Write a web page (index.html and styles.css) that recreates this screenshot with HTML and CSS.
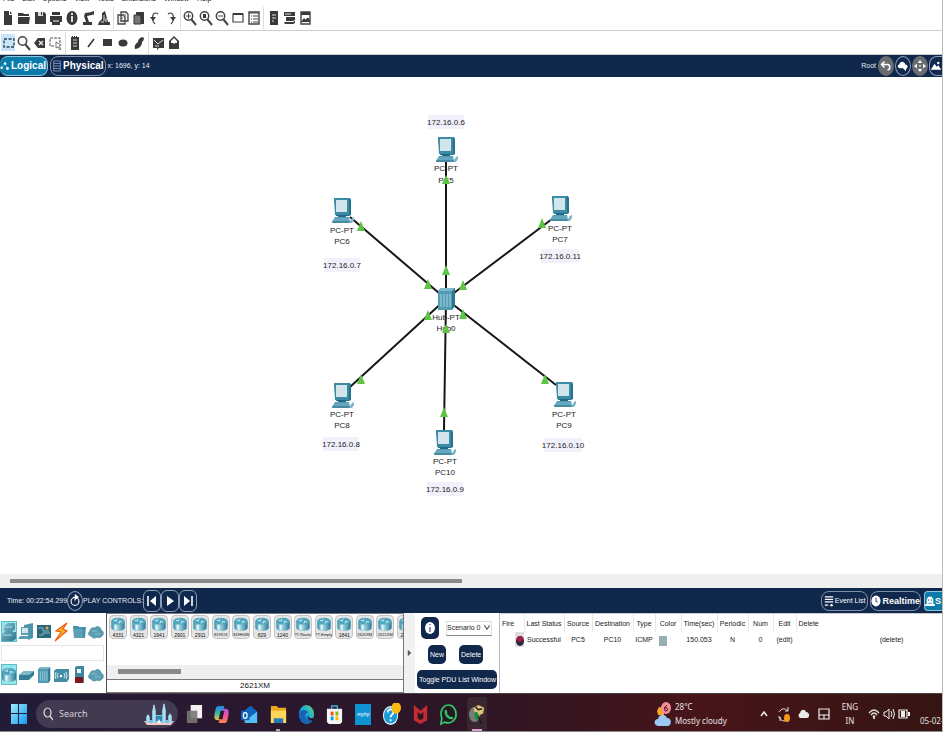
FILE: index.html
```html
<!DOCTYPE html>
<html lang="en">
<head>
<meta charset="utf-8">
<title>Network Simulator</title>
<link rel="stylesheet" href="styles.css">
</head>
<body>
<svg class="defs" aria-hidden="true">
  <defs>
    <linearGradient id="teal" x1="0" y1="0" x2="1" y2="1"><stop offset="0" stop-color="#7fbccd"/><stop offset="1" stop-color="#2c7892"/></linearGradient>
    <linearGradient id="cyl" x1="0" y1="0" x2="1" y2="0"><stop offset="0" stop-color="#2f8ba8"/><stop offset=".35" stop-color="#b9e2ec"/><stop offset="1" stop-color="#247b99"/></linearGradient>
    <linearGradient id="win" x1="0" y1="0" x2="1" y2="1"><stop offset="0" stop-color="#9be9ff"/><stop offset="1" stop-color="#149bf0"/></linearGradient>
    <linearGradient id="edge" x1="0" y1="1" x2="1" y2="0"><stop offset="0" stop-color="#1670c8"/><stop offset=".5" stop-color="#20a8e0"/><stop offset="1" stop-color="#5bd86a"/></linearGradient>
    <linearGradient id="cop" x1="0" y1="0" x2="0" y2="1"><stop offset="0" stop-color="#2187e8"/><stop offset=".5" stop-color="#37b5a5"/><stop offset="1" stop-color="#f4c533"/></linearGradient>
    <linearGradient id="cop2" x1="0" y1="0" x2="0" y2="1"><stop offset="0" stop-color="#a957ec"/><stop offset=".5" stop-color="#ef5595"/><stop offset="1" stop-color="#fb8b43"/></linearGradient>
  </defs>
  <symbol id="pc" viewBox="0 0 22 26">
    <path d="M2 1h16l1 2v15l-2 1H4z" fill="#27718a"/>
    <path d="M2 1h15v17H3z" fill="#3b8ba5"/>
    <path d="M4 3h11v12H4z" fill="#d2e5ec"/>
    <path d="M6 18h8v3H6z" fill="#256780"/>
    <path d="M3 20h14l1 5H0z" fill="#529db5"/>
    <path d="M0 24h18v2H0zM2 22h15" fill="#2c738c" stroke="#8fc4d3" stroke-width=".6"/>
    <path d="M18 24l2-3 2-1v3l-2 3h-2z" fill="#7fb6c7"/>
  </symbol>
  <symbol id="hub" viewBox="0 0 18 22">
    <path d="M1 3l3-3h14v18l-3 4H1z" fill="#2b7590"/><path d="M1 3h14v19H1z" fill="#519bb5"/><path d="M1 3l3-3h14l-3 3z" fill="#80b9ca"/>
    <path d="M4 6v13M7 6v13M10 6v13M13 6v13" stroke="#a7d3df" stroke-width="1"/>
  </symbol>
  <symbol id="router" viewBox="0 0 18 18">
    <path d="M1 5v8c0 5 16 5 16 0V5z" fill="url(#cyl)"/><ellipse cx="9" cy="5" rx="8" ry="4" fill="#4ea5bd"/>
    <path d="M4 4l4 1M14 6l-4-1M8 2l-1 2M10 8l1-2" stroke="#e6f8fb" stroke-width="1"/><path d="M6 10v5" stroke="#e8fbff" stroke-width="2"/>
  </symbol>
  <symbol id="cloud" viewBox="0 0 16 16"><path d="M3 12C0 12 0 8 2 7c0-3 3-4 5-3 2-3 6-1 6 2 3 1 3 5 1 6-1 2-4 2-5 1-2 2-5 1-6-1z" fill="#5b9db2" stroke="#3e8098" stroke-width=".6"/><path d="M4 7h5M7 10h5" stroke="#8ec1cf"/></symbol>
  <symbol id="lens" viewBox="0 0 16 16"><circle cx="6.500" cy="6" r="4.200" fill="none" stroke="#444" stroke-width="1.500"/><path d="M9.500 9.500L14 15" stroke="#444" stroke-width="2"/></symbol>
</svg>

<div class="app">
<nav class="menu" aria-label="Menu">
  <a href="#">File</a><a href="#">Edit</a><a href="#">Options</a><a href="#">View</a><a href="#">Tools</a><a href="#">Extensions</a><a href="#">Window</a><a href="#">Help</a>
</nav>

<div class="toolbar" role="toolbar" aria-label="Main">
  <button aria-label="New"><svg viewBox="0 0 16 16"><path d="M4 1h5v4h3v10H4zM10 1l2 3h-2z"/></svg></button>
  <button aria-label="Open"><svg viewBox="0 0 16 16"><path d="M2 3h5l1 1h5v2H2zM2 7h12l-1 7H2z"/></svg></button>
  <button aria-label="Save"><svg viewBox="0 0 16 16"><path d="M3 2h9l2 2v10H3z"/><path d="M6 2h5v4H6z" fill="#ddd"/><path d="M9 2h1v3H9z"/></svg></button>
  <button aria-label="Print"><svg viewBox="0 0 16 16"><path d="M4 2h8v3H4zM2 6h12v6H2zM4 10h8v5H4z"/><path d="M5 11h6" stroke="#eee"/></svg></button>
  <button aria-label="Info"><svg viewBox="0 0 16 16"><ellipse cx="8" cy="8" rx="5.500" ry="7"/><path d="M7 3h2v2H7zM7 6h2v6H7z" fill="#ddd"/></svg></button>
  <button aria-label="Wizard"><svg viewBox="0 0 16 16"><path d="M3 15h9v-3H9L7 6l5-1V2L5 3l-1 3 2 6H3z"/><path d="M11 2l3-1v4l-3-1z"/></svg></button>
  <button aria-label="Model"><svg viewBox="0 0 16 16"><path d="M2 15h12v-3h-2L9 1 6 3v6l-3 3z"/><path d="M8 5v6M10 8v4M5 12h3" stroke="#ddd"/></svg></button>
  <i></i>
  <button aria-label="Copy"><svg viewBox="0 0 16 16"><path d="M6 2h5l2 2v7H6zM3 5h5l2 2v7H3z" fill="#eee" stroke="#444" stroke-width="1.300"/><path d="M5 8h3M5 11h3M8 5h3" stroke="#666"/></svg></button>
  <button aria-label="Paste"><svg viewBox="0 0 16 16"><path d="M5 2h8v12H9V5H5z"/><path d="M3 5h5l2 2v7H3z" fill="#777" stroke="#333"/></svg></button>
  <button aria-label="Undo"><svg viewBox="0 0 16 16"><path d="M8 14c-3-3-3-6-2-9s4-2 5-1" fill="none" stroke="#444" stroke-width="1.200"/><path d="M3 7h6l-3 4z"/></svg></button>
  <button aria-label="Redo"><svg viewBox="0 0 16 16"><path d="M8 14c3-3 3-6 2-9S6 3 5 4" fill="none" stroke="#444" stroke-width="1.200"/><path d="M13 7H7l3 4z"/></svg></button>
  <i></i>
  <button aria-label="Zoom in"><svg viewBox="0 0 16 16"><use href="#lens"/><path d="M4 6h5M6.500 3.500v5" stroke="#444"/></svg></button>
  <button aria-label="Zoom reset"><svg viewBox="0 0 16 16"><use href="#lens"/><path d="M5 4h3v4H5z"/></svg></button>
  <button aria-label="Zoom out"><svg viewBox="0 0 16 16"><use href="#lens"/><path d="M4 6h5" stroke="#444"/></svg></button>
  <button aria-label="Viewport"><svg viewBox="0 0 16 16"><path d="M3 4h10v8H3z" fill="none" stroke="#444" stroke-width="1.200"/><path d="M3 3h10v2H3z"/></svg></button>
  <button aria-label="List"><svg viewBox="0 0 16 16"><path d="M3 2h10v12H3z" fill="none" stroke="#444" stroke-width="1.400"/><path d="M3 3h10M5 6h1M7 6h5M5 9h1M7 9h5M5 12h1M7 12h5" stroke="#444" stroke-width="1.200"/></svg></button>
  <i></i>
  <button aria-label="Notes"><svg viewBox="0 0 16 16"><path d="M5 1h8v14H5z"/><path d="M7 5h4M7 8h4M7 11h2" stroke="#ddd"/></svg></button>
  <button aria-label="Layers"><svg viewBox="0 0 16 16"><path d="M3 2h11v4H3zM5 7h9v3l-2 1H5zM3 12h9l2-1v2l-2 1H4z"/><path d="M4 4h6" stroke="#ddd"/></svg></button>
  <button aria-label="Picture"><svg viewBox="0 0 16 16"><path d="M4 2h9v12H4z" fill="none" stroke="#444" stroke-width="1.400"/><path d="M4 2h9v3H4zM4 12l3-4 2 2c1-4 4-2 4 2z"/></svg></button>
</div>
<div class="toolbar" role="toolbar" aria-label="Drawing">
  <button class="on" aria-label="Select"><svg viewBox="0 0 16 16"><path d="M3 4h10v8H3z" fill="none" stroke="#245" stroke-width="1.300" stroke-dasharray="3 1.500"/></svg></button>
  <button aria-label="Inspect"><svg viewBox="0 0 16 16"><use href="#lens"/></svg></button>
  <button aria-label="Erase"><svg viewBox="0 0 16 16"><path d="M2 8l4-5h7v10H6z"/><path d="M7 6l4 4M11 6l-4 4" stroke="#eee" stroke-width="1.300"/></svg></button>
  <button aria-label="Resize"><svg viewBox="0 0 16 16"><path d="M12 8V3H2v8h5" fill="none" stroke="#555" stroke-dasharray="3 1"/><path d="M8 7l5 3-2 1 2 3-1 1-2-3-2 1z" stroke="#555" stroke-width=".8" fill="#fff"/></svg></button>
  <i></i>
  <button aria-label="Note"><svg viewBox="0 0 16 16"><path d="M4 2h1V1h1v1h1V1h1v1h1V1h1v1h2v13H4z"/><path d="M6 5h4M6 8h4M6 11h4" stroke="#ccc"/></svg></button>
  <button aria-label="Line"><svg viewBox="0 0 16 16"><path d="M5 12l6-8" stroke="#333" stroke-width="1.500"/></svg></button>
  <button aria-label="Rectangle"><svg viewBox="0 0 16 16"><path d="M4 4h9v7H4z"/></svg></button>
  <button aria-label="Ellipse"><svg viewBox="0 0 16 16"><ellipse cx="8" cy="8" rx="4.500" ry="3.500"/></svg></button>
  <button aria-label="Freeform"><svg viewBox="0 0 16 16"><path d="M4 14c-1-3 0-5 3-7 0-4 5-6 6-4 0 2-1 3-2 4 0 4-3 7-7 7z"/></svg></button>
  <i></i>
  <button aria-label="Simple PDU"><svg viewBox="0 0 16 16"><path d="M3 3h11v10H9l-2 2v-2H3z"/><path d="M4 5l4 4 5-4M5 11h4" stroke="#ddd" fill="none"/></svg></button>
  <button aria-label="Complex PDU"><svg viewBox="0 0 16 16"><path d="M3 6l5-5 5 5v8H3z"/><path d="M5 6l3-3 3 3v2H9l-1 1-1-1H5z" fill="#fff"/></svg></button>
</div>

<header class="bar modes">
  <button class="pill active"><svg viewBox="0 0 12 14"><path d="M2 9l4-5 3 6" fill="none" stroke="#8fd0ec" stroke-width=".6"/><circle cx="2" cy="9" r="1.500"/><circle cx="6" cy="4" r="1.500"/><circle cx="9" cy="10" r="1.700"/></svg>Logical</button>
  <button class="pill"><svg viewBox="0 0 12 14"><path d="M2 1h8v12H2zM2 4h8M2 7h8M2 10h8" fill="none" stroke="#8a9cc0"/></svg>Physical</button>
  <span class="coords">x: 1696, y: 14</span>
  <span class="grow"></span>
  <span class="root">Root</span>
  <button class="disc grey" aria-label="Back"><svg viewBox="0 0 16 16"><path d="M6 2L2 6l4 4M2 6h8c4 0 4 7 0 7" fill="none" stroke="#fff" stroke-width="2"/></svg></button>
  <button class="disc" aria-label="New cluster"><svg viewBox="0 0 16 16"><path d="M3 11c-3-2-2-5 0-5 1-5 7-5 8 0 4 0 4 5 1 6v3l-4-4z" fill="#fff"/></svg></button>
  <button class="disc grey" aria-label="Move"><svg viewBox="0 0 16 16"><path d="M8 0l3 4H5zM8 16l3-4H5zM0 8l4-3v6zM16 8l-4-3v6zM7 7h2v2H7z" fill="#fff"/></svg></button>
  <button class="disc last" aria-label="Background"><svg viewBox="0 0 16 16"><path d="M1 13l5-8 3 4 2-2 4 6z" fill="#fff"/><circle cx="11" cy="4" r="1.700" fill="#fff"/></svg></button>
</header>

<main class="canvas">
<svg class="net" width="945" height="490" role="img" aria-label="Hub topology">
  <g stroke="#161616" stroke-width="2">
    <path d="M446 222V84M446 222L350 140M446 222L552 142M446 222L350 310M446 222L556 308M446 222L444 353"/>
  </g>
  <g class="labels">
    <g fill="#f1f1fb"><path d="M428 38h36v14h-36zM324 181h36v14h-36zM541 172h38v14h-38zM323 360h36v14h-36zM544 361h38v14h-38zM427 405h36v14h-36z"/></g>
    <use href="#pc" x="436" y="59" width="22" height="26"/><use href="#pc" x="332" y="120" width="22" height="26"/><use href="#pc" x="550" y="118" width="22" height="26"/>
    <use href="#pc" x="332" y="305" width="22" height="26"/><use href="#pc" x="554" y="304" width="22" height="26"/><use href="#pc" x="434" y="352" width="22" height="26"/>
    <use href="#hub" x="437" y="211" width="18" height="22"/>
    <text x="446" y="48">172.16.0.6</text><text x="446" y="94">PC-PT</text><text x="446" y="106">PC5</text>
    <text x="342" y="156">PC-PT</text><text x="342" y="167">PC6</text><text x="342" y="191">172.16.0.7</text>
    <text x="560" y="154">PC-PT</text><text x="560" y="165">PC7</text><text x="560" y="182">172.16.0.11</text>
    <text x="446" y="243">Hub-PT</text><text x="446" y="254">Hub0</text>
    <text x="342" y="340">PC-PT</text><text x="342" y="351">PC8</text><text x="341" y="370">172.16.0.8</text>
    <text x="564" y="340">PC-PT</text><text x="564" y="351">PC9</text><text x="563" y="371">172.16.0.10</text>
    <text x="445" y="387">PC-PT</text><text x="445" y="398">PC10</text><text x="445" y="415">172.16.0.9</text>
  </g>
  <path fill="#5fc343" d="M446 98l4 9h-8zM446 188l4 10h-8zM361 144l4 10h-8zM428 202l4 10h-8zM542 141l4 10h-8zM463 203l4 10h-8zM428 233l4 10h-8zM463 232l4 10h-8zM446 247l4 9h-8zM361 297l4 10h-8zM545 297l4 10h-8zM444 330l4 10h-8z"/>
</svg>
</main>
<div class="hscroll"><span class="thumb"></span></div>

<div class="bar sim">
  <span>Time: 00:22:54.299</span>
  <button class="disc" aria-label="Reset time"><svg viewBox="0 0 16 16"><circle cx="8" cy="9" r="4.500" fill="none" stroke="#fff" stroke-width="1.300"/><path d="M8 1l4 3-4 3zM8 6v3" fill="#fff" stroke="#fff" stroke-width=".7"/></svg></button>
  <span class="controls">PLAY CONTROLS:</span>
  <button class="play" aria-label="Step back"><svg viewBox="0 0 16 16"><path d="M4 3v10" stroke="#fff" stroke-width="1.600"/><path d="M12 3v10L6 8z"/></svg></button>
  <button class="play" aria-label="Play"><svg viewBox="0 0 16 16"><path d="M5 3v10l7-5z"/></svg></button>
  <button class="play" aria-label="Step forward"><svg viewBox="0 0 16 16"><path d="M12 3v10" stroke="#fff" stroke-width="1.600"/><path d="M4 3v10l6-5z"/></svg></button>
  <span class="grow"></span>
  <button class="pill event"><svg viewBox="0 0 12 14"><path d="M1 2h10M1 5h10M1 8h10M1 12h4" stroke="#fff" stroke-width="1.500"/><circle cx="9" cy="12" r="1.500"/></svg>Event List</button>
  <button class="pill real"><svg viewBox="0 0 12 14"><ellipse cx="6" cy="7" rx="5.500" ry="6.500"/><path d="M6 3v5h2" stroke="#10284c" fill="none"/></svg>Realtime</button>
  <button class="pill active simulation"><svg viewBox="0 0 12 14"><path d="M2 11V5l2-3h4l2 3v6zM0 11h12v2H0z"/><path d="M4 5h1v2H4zM7 5h1v2H7zM4 9h4v1H4z" fill="#0b7ba9"/></svg>S</button>
</div>

<section class="panel">
  <div class="palette">
    <div class="cats">
      <button class="on" aria-label="Network devices"><svg viewBox="0 0 16 20"><path d="M3 4l4-3h7v6l-3 3h5v6l-4 3H1v-7l4-3H3z" fill="url(#teal)"/><path d="M3 5h8M2 13h9" stroke="#b7dce5"/></svg></button>
      <button aria-label="End devices"><svg viewBox="0 0 16 20"><path d="M6 3l9-2v15l-5 2V9H6z" fill="#4d94ab"/><path d="M3 5h8v8H3zM2 14h8l2 3H0z" fill="#5b9db2"/><path d="M4 6h6v5H4z" fill="#cfe6ed"/></svg></button>
      <button aria-label="Components"><svg viewBox="0 0 16 20"><path d="M1 3h14v13H1z" fill="#2c6679"/><path d="M2 6h5v3h6M3 13h4v-2h7" fill="none" stroke="#83b9c7"/><circle cx="11" cy="6" r="1.500" fill="#d7b46b"/></svg></button>
      <button aria-label="Connections"><svg viewBox="0 0 16 20"><path d="M14 1L3 9l5 1-6 9L14 9l-4-2z" fill="#f8b321" stroke="#ee5a1d" stroke-width="1.200"/></svg></button>
      <button aria-label="Miscellaneous"><svg viewBox="0 0 16 20"><path d="M2 4h5l1 1h7l-1 11H3z" fill="#4791a9"/><path d="M3 7h8l1 9H3z" fill="#5ba0b5"/></svg></button>
      <button aria-label="Multiuser"><svg viewBox="0 0 16 16"><use href="#cloud"/></svg></button>
    </div>
    <div class="blank"></div>
    <div class="cats">
      <button class="on" aria-label="Routers"><svg viewBox="0 0 18 18"><use href="#router"/></svg></button>
      <button aria-label="Switches"><svg viewBox="0 0 16 20"><path d="M1 10l5-4h10v4l-5 5H1z" fill="#367d96"/><path d="M1 10l5-4h10l-5 4z" fill="#82b9c8"/></svg></button>
      <button aria-label="Hubs"><svg viewBox="-2 -2 22 26"><use href="#hub" width="18" height="22"/></svg></button>
      <button aria-label="Wireless"><svg viewBox="0 0 16 20"><path d="M1 6l2-2h13v10l-2 3H1z" fill="#438ca3"/><path d="M5 8q-2 3 0 5M11 8q2 3 0 5M3 7q-2 4 0 7M13 7q2 4 0 7" fill="none" stroke="#d6edf2"/><circle cx="8" cy="11" r="1.300" fill="#fff"/></svg></button>
      <button aria-label="Security"><svg viewBox="0 0 16 20"><path d="M4 2l2-1h7v17H4z" fill="#3f879e"/><path d="M4 12h8v6H4z" fill="#7d1720"/><path d="M6 4h4v4H6z" fill="#e9f4f6"/></svg></button>
      <button aria-label="WAN"><svg viewBox="0 0 16 16"><use href="#cloud"/></svg></button>
    </div>
  </div>

  <div class="devices">
    <div class="cards">
      <button><svg><use href="#router"/></svg>4331</button><button><svg><use href="#router"/></svg>4321</button><button><svg><use href="#router"/></svg>1941</button><button><svg><use href="#router"/></svg>2901</button><button><svg><use href="#router"/></svg>2911</button><button class="long"><svg><use href="#router"/></svg>819IOX</button><button class="long"><svg><use href="#router"/></svg>819HGW</button><button><svg><use href="#router"/></svg>829</button><button><svg><use href="#router"/></svg>1240</button><button class="long"><svg><use href="#router"/></svg>PT-Router</button><button class="long"><svg><use href="#router"/></svg>PT-Empty</button><button><svg><use href="#router"/></svg>1841</button><button class="long"><svg><use href="#router"/></svg>2620XM</button><button class="long"><svg><use href="#router"/></svg>2621XM</button><button><svg><use href="#router"/></svg>2811</button>
    </div>
    <div class="grow"></div>
    <div class="cscroll"><span class="thumb"></span></div>
    <div class="picked">2621XM</div>
  </div>
  <div class="splitter"><svg viewBox="0 0 6 8"><path d="M1 0l4 4-4 4z" fill="#555"/></svg></div>

  <div class="scenario">
    <div class="line">
      <button class="navy info" aria-label="Scenario info"><svg viewBox="0 0 14 16"><ellipse cx="7" cy="8" rx="5" ry="6" fill="#fff"/><path d="M7 4v1M7 7v5" stroke="#10284c"/></svg></button>
      <label class="pick"><select aria-label="Scenario"><option>Scenario 0</option></select><svg viewBox="0 0 6 6"><path d="M1 1l2 3 2-3" fill="none" stroke="#555" stroke-width=".8"/></svg></label>
    </div>
    <div class="line two"><button class="navy">New</button><button class="navy">Delete</button></div>
    <button class="navy toggle">Toggle PDU List Window</button>
  </div>

  <div class="pdus">
    <table>
      <colgroup><col class="w-fire"><col class="w-status"><col class="w-source"><col class="w-dest"><col class="w-type"><col class="w-color"><col class="w-time"><col class="w-per"><col class="w-num"><col class="w-edit"><col></colgroup>
      <thead><tr><th>Fire</th><th>Last Status</th><th>Source</th><th>Destination</th><th>Type</th><th>Color</th><th>Time(sec)</th><th>Periodic</th><th>Num</th><th>Edit</th><th class="del">Delete</th></tr></thead>
      <tbody><tr><td class="fire"><button aria-label="Fire"><svg viewBox="0 0 9 12"><ellipse cx="5" cy="7" rx="4" ry="5" fill="#27263e"/><ellipse cx="5" cy="5" rx="3" ry="3" fill="#a71a44"/></svg></button></td><td>Successful</td><td>PC5</td><td>PC10</td><td>ICMP</td><td class="chip"><span></span></td><td>150.053</td><td>N</td><td>0</td><td>(edit)</td><td>(delete)</td></tr></tbody>
    </table>
  </div>
</section>

<footer class="taskbar">
  <button class="start" aria-label="Start"><svg viewBox="0 0 16 20"><path d="M0 0h7v9H0zM8 0h8v9H8zM0 10h7v10H0zM8 10h8v10H8z" fill="url(#win)"/></svg></button>
  <label class="search"><svg viewBox="0 0 10 14"><ellipse cx="4.500" cy="5.500" rx="3.500" ry="4.500" fill="none" stroke="#ddd" stroke-width="1.200"/><path d="M7 9l3 4" stroke="#ddd" stroke-width="1.300"/></svg><input type="text" placeholder="Search" aria-label="Search"><svg class="city" viewBox="0 0 30 22"><path d="M0 18h30l-3 4H3z" fill="#f4c9c6"/><path d="M2 20v-6l2-3 2 3v3h2V8l2-7 2 7v4h6V7l2-7 2 7v10h2v-4l2-3 2 3v7z" fill="#7fc0dc"/><path d="M10 2v18M20 1v19M4 12v8M26 12v8" stroke="#d9f3ff"/><path d="M12 13h6v5h-6z" fill="#3584ad"/><path d="M13 20l2-4 2 4z" fill="#fff"/></svg></label>
  <div class="apps">
    <button aria-label="Task view"><svg viewBox="0 0 20 24"><path d="M7 2h12v14H7z" fill="#f3f1f2"/><path d="M3 8h11v13H3z" fill="#777" opacity=".9"/></svg></button>
    <button aria-label="Copilot"><svg viewBox="0 0 20 24"><path d="M7 3h6l-4 15H6c-4 0-4-3-3-8 1-4 1-7 4-7z" fill="url(#cop)"/><path d="M11 6h3c4 0 4 3 3 8-1 4-1 7-4 7H7z" fill="url(#cop2)"/><path d="M9 8h4l-2 9H7z" fill="#2a1832"/></svg></button>
    <button aria-label="Outlook"><svg viewBox="0 0 20 24"><path d="M5 8l6-5 7 6v12H5z" fill="#1e8be0"/><path d="M5 14l13-5v12H5z" fill="#55c0f5"/><path d="M5 8l6-5 7 6-9 7z" fill="#0f67bd"/><path d="M1 8h9v10H1z" fill="#0f62b7"/><ellipse cx="5.500" cy="13" rx="2" ry="3" fill="none" stroke="#fff" stroke-width="1.300"/></svg></button>
    <button class="running" aria-label="Files"><svg viewBox="0 0 20 24"><path d="M2 3h6l2 2h8v16H2z" fill="#e9a91d"/><path d="M2 8h16v13H2z" fill="#ffd65a"/><path d="M5 16h10v5H5z" fill="#2575bf"/></svg></button>
    <button aria-label="Edge"><svg viewBox="0 0 20 24"><ellipse cx="10" cy="12" rx="8" ry="10" fill="url(#edge)"/><path d="M2 12c1-6 8-6 10-2-3 0-4 3-2 6 2 2 5 2 7 1-3 5-9 6-12 2-2-2-3-4-3-7z" fill="#1665b5"/><path d="M12 12c-1 4 3 5 6 3l-1 3c-3 1-6-1-6-4z" fill="#2a1626"/></svg></button>
    <button aria-label="Store"><svg viewBox="0 0 20 24"><path d="M7 6V3h6v3" fill="none" stroke="#4aaee8" stroke-width="1.500"/><path d="M2 6h16v14l-2 2H4l-2-2z" fill="#f4f4f6"/><path d="M6 9h3v4H6z" fill="#f25022"/><path d="M11 9h3v4h-3z" fill="#7fba00"/><path d="M6 14h3v4H6z" fill="#00a4ef"/><path d="M11 14h3v4h-3z" fill="#ffb900"/></svg></button>
    <button class="hp" aria-label="myHP"><span>myhp</span></button>
    <button aria-label="Help"><svg viewBox="0 0 20 24"><ellipse cx="9" cy="13" rx="8" ry="10" fill="#e9f7ff"/><ellipse cx="9" cy="13" rx="7" ry="8.500" fill="#1c9bd9"/><path d="M6 10c0-5 7-4 6 0 0 2-3 2-3 5M9 17v2" fill="none" stroke="#fff" stroke-width="2"/><ellipse cx="15" cy="5" rx="5" ry="6" fill="#fdb913"/></svg></button>
    <button aria-label="McAfee"><svg viewBox="0 0 20 24"><path d="M3 2l7 6 7-6v16l-7 4-7-4z" fill="#c42c34"/><path d="M7 9l3 3 3-3v7l-3 2-3-2z" fill="#2e1523"/></svg></button>
    <button aria-label="WhatsApp"><svg viewBox="0 0 20 24"><path d="M2 22l1-6C0 8 5 2 10 2s8 5 8 10-5 11-12 8z" fill="#241b22" stroke="#35c568" stroke-width="1.800"/><path d="M6 8c1-2 2-1 3 2l-1 1 4 4 1-1c3 1 2 3 0 3C9 17 5 12 6 8z" fill="#35c568"/></svg></button>
    <button class="open" aria-label="Simulator"><svg viewBox="0 0 20 24"><ellipse cx="8" cy="12" rx="6" ry="8" fill="#777b78"/><path d="M7 5l5-3 6 3-1 6-5 2-4-2z" fill="#e2c07b"/><path d="M8 9c5 0 5 4 3 9-3-1-3-5-3-9z" fill="#1b8a3a"/><path d="M12 14l3 8M9 4l3 3 4-1" fill="none" stroke="#181818" stroke-width="1.500"/></svg></button>
  </div>
  <span class="grow"></span>
  <div class="weather"><svg viewBox="0 0 18 26"><path d="M3 10l2-4 5 1v7H4z" fill="#f5a623"/><path d="M4 25c-5-1-4-7 0-7 1-6 8-5 9-1 5 0 5 7 1 8z" fill="#9cc6f4"/><ellipse cx="12" cy="7" rx="5" ry="6" fill="#f58c97"/><path d="M13 4q-4 2-2 6 4 0 2-3-1-1-3 0" fill="none" stroke="#4b1622"/></svg><div>28°C<br>Mostly cloudy</div></div>
  <div class="tray">
    <svg viewBox="0 0 12 16"><path d="M3 10l3-4 3 4" fill="none" stroke="#eee" stroke-width="1.500"/></svg>
    <svg viewBox="0 0 12 16"><path d="M1 6q4-6 9-1V1M10 5H7M2 15v-4H0M2 11q0 4 5 4" fill="none" stroke="#ddd"/><ellipse cx="9" cy="12" rx="3" ry="4" fill="#f79a1c"/></svg>
    <svg viewBox="0 0 12 16"><path d="M2 12c-2-1-2-4 0-5 1-4 5-4 6-1 4 0 4 6 1 6z" fill="#e9e9e9"/></svg>
    <svg viewBox="0 0 12 16"><path d="M1 3h10v10H1zM1 9h10M6 9v4" fill="none" stroke="#eee" stroke-width="1.200"/></svg>
  </div>
  <div class="lang">ENG<br>IN</div>
  <div class="net-tray">
    <svg viewBox="0 0 12 16"><path d="M1 7q5-6 10 0M3 9q3-4 6 0M5 11q1-2 2 0" fill="none" stroke="#ddd" stroke-width="1.300"/><circle cx="6" cy="12" r="1" fill="#fff"/></svg>
    <svg viewBox="0 0 12 16"><path d="M1 6h2l3-3v10l-3-3H1zM8 5q2 3 0 6M10 3q3 5 0 10" fill="none" stroke="#eee"/></svg>
    <svg viewBox="0 0 12 16"><path d="M1 4h8v8H1z" fill="none" stroke="#eee" stroke-width="1.200"/><path d="M3 5h4v6H3zM10 6h2v4h-2z" fill="#eee"/></svg>
  </div>
  <div class="date">05-02-</div>
</footer>
</div>
</body>
</html>
```

FILE: styles.css
```css
* { box-sizing: border-box; }
body {
  margin: 0;
  background: #fff;
  color: #222;
  font-family: "Liberation Sans", sans-serif;
  font-size: 7px;
  line-height: 12px;
}
button, input, select { font: inherit; color: inherit; margin: 0; padding: 0; border: 0; background: none; }
svg { display: block; flex: none; }
.defs { position: absolute; width: 0; height: 0; }
.grow { flex: 1; }
.app {
  display: flex;
  flex-direction: column;
  min-height: 100vh;
  margin-right: 2px;
  border-right: 1px solid #bbb;
  overflow: hidden;
}

.menu { display: flex; align-items: flex-end; gap: 8px; height: 5px; padding-left: 3px; overflow: hidden; }
.menu a { color: #111; text-decoration: none; }
.toolbar { display: flex; align-items: center; height: 26px; border-bottom: 1px solid #ccc; fill: #3a3a3a; }
.toolbar + .toolbar { height: 24px; }
.toolbar button { width: 16px; height: 20px; display: grid; place-items: center; }
.toolbar svg { width: 16px; height: 16px; }
.toolbar i { width: 1px; height: 22px; margin: 0 1px; background: #ddd; }
.toolbar .on { width: 14px; height: 17px; margin: 0 1px; background: #cbe5f8; }

.bar { display: flex; align-items: center; background: #10284c; color: #e8ebf2; }
.modes { height: 22px; }
.sim { height: 25px; padding-left: 7px; }
.pill {
  display: flex; align-items: center; gap: 1px;
  height: 20px; padding: 0 2px;
  border: 1px solid #7e8fae; border-radius: 8px;
  color: #fff; fill: #fff; font-size: 10px; font-weight: bold; white-space: nowrap;
}
.pill svg { width: 10px; height: 14px; }
.pill.active { background: #0b7ba9; border-color: #8fc6dd; }
.modes .pill { margin-right: 2px; padding: 0 1px; }
.modes .pill:first-child { padding: 0 1px 0 0; border-left: 0; }
.pill.event { font-size: 7px; font-weight: normal; margin-right: 2px; }
.pill.real { margin-right: 3px; padding: 0; font-size: 9px; }
.pill.simulation { width: 18px; padding: 0; gap: 0; border-radius: 4px 0 0 4px; border-right: 0; overflow: hidden; font-size: 9px; }
.root { margin-right: 2px; }
.disc { width: 16px; height: 20px; border: 1px solid #8b9cba; border-radius: 50%; display: grid; place-items: center; }
.disc svg { width: 14px; height: 15px; }
.modes .disc svg { width: 12px; height: 14px; }
.disc.grey { background: #696c70; border-color: #696c70; }
.modes .disc { margin-right: 1px; }
.modes .disc.last { width: 13px; margin: 0; border-right: 0; border-radius: 8px 0 0 8px; overflow: hidden; }
.play { width: 18px; height: 22px; border: 1px solid #8b9cba; border-radius: 6px; display: grid; place-items: center; fill: #fff; }
.play svg { width: 16px; height: 18px; }

.canvas { flex: 1; overflow: hidden; }
.labels text { font-size: 8px; text-anchor: middle; fill: #222; }
.hscroll { height: 14px; padding: 5px 10px; background: #efefef; }
.thumb { display: block; background: #8a8a8a; height: 4px; }
.hscroll .thumb { width: 49%; }

.panel { display: flex; height: 80px; background: #fff; }
.palette { width: 107px; display: flex; flex-direction: column; justify-content: space-between; padding: 8px 2px 8px 1px; border-right: 1px solid #555; }
.cats { display: flex; justify-content: space-between; }
.cats button { width: 16px; height: 21px; display: grid; place-items: center; }
.cats svg { width: 16px; height: 20px; }
.cats .on { background: #92e6ec; outline: 1px solid #5cbcc8; outline-offset: -1px; }
.blank { height: 16px; border: 1px solid #e6e6e6; }
.devices { flex: 0 1 297px; min-width: 0; display: flex; flex-direction: column; overflow: hidden; border: 1px solid #777; border-left: 0; }
.cards { display: flex; justify-content: space-between; margin: 1px -12px 0 2px; }
.cards button {
  flex: none; width: 18px; height: 24px; padding-top: 1px; overflow: hidden;
  display: flex; flex-direction: column; align-items: center;
  border: 1px solid #c4c4c4; border-radius: 4px; background: #e5e5e5;
  color: #111; font-size: 5px; line-height: 6px; white-space: nowrap;
}
.cards .long { font-size: 4px; }
.cards svg { width: 16px; height: 15px; }
.cscroll { height: 14px; padding: 4px 11px; background: #efefef; }
.cscroll .thumb { width: 63px; height: 5px; }
.picked { height: 13px; border-top: 1px solid #777; text-align: center; font-size: 8px; color: #111; }
.splitter { width: 11px; display: grid; place-items: center; background: #f1f1f1; }
.splitter svg { width: 5px; height: 8px; }

.scenario { width: 84px; padding: 4px 2px; display: flex; flex-direction: column; justify-content: space-between; }
.line { display: flex; align-items: center; gap: 7px; padding-left: 4px; }
.line.two { gap: 13px; padding-left: 11px; }
.navy { height: 19px; padding: 0 2px; border-radius: 5px; background: #10284c; color: #fff; white-space: nowrap; }
.navy.info { width: 18px; height: 22px; padding: 0; display: grid; place-items: center; }
.navy.info svg { width: 14px; height: 16px; }
.pick { display: flex; align-items: center; width: 46px; height: 15px; border: 1px solid #ddd; border-bottom-color: #888; }
.pick select { appearance: none; flex: 1; min-width: 0; color: #222; }
.pick svg { width: 8px; height: 8px; }

.pdus { flex: 1; min-width: 0; overflow: hidden; border-left: 1px solid #bbb; border-top: 1px solid #ccc; }
table { width: 100%; table-layout: fixed; border-collapse: collapse; }
th, td { padding: 0; height: 15px; text-align: center; font-weight: normal; white-space: nowrap; }
thead th { height: 18px; padding-top: 2px; border-right: 1px solid #e8e8e8; }
thead th:last-child { border: 0; }
.w-fire { width: 24px; } .w-status { width: 40px; } .w-source { width: 28px; } .w-dest { width: 41px; }
.w-type { width: 22px; } .w-color { width: 26px; } .w-time { width: 36px; } .w-per { width: 31px; }
.w-num { width: 25px; } .w-edit { width: 23px; }
thead th:first-child, th.del { text-align: left; padding-left: 2px; }
.fire button { display: grid; place-items: center; width: 9px; height: 15px; margin-left: auto; background: #ddd; }
.fire svg { width: 9px; height: 12px; }
.chip span { display: block; width: 8px; height: 10px; margin: 3px 0 0 4px; background: #96b0b3; }
tbody td:last-child { padding-left: 45px; }

.taskbar {
  display: flex; align-items: center; height: 39px; overflow: hidden; padding: 3px 0 0 11px;
  border-top: 1px solid #444; border-bottom: 1px solid #888;
  background: linear-gradient(90deg, #231c38, #2a1830 25%, #2d1524 50%, #471519 75%, #351513);
  color: #e6e0e2; font-family: "Noto Sans", sans-serif; font-size: 8px; line-height: 14px; white-space: nowrap;
}
.taskbar > * { flex: none; }
.taskbar > .grow { flex: 1; }
.start svg { width: 16px; height: 20px; }
.search { display: flex; align-items: center; gap: 6px; width: 142px; height: 28px; margin-left: 9px; padding: 0 4px 0 7px; border-radius: 14px; background: #423a51; }
.search svg { width: 10px; height: 14px; }
.search .city { width: 30px; height: 22px; }
.search input { flex: 1; min-width: 0; font-size: 9px; color: #fff; }
.search input::placeholder { color: #d5d1da; opacity: 1; }
.apps { display: flex; justify-content: space-between; align-items: center; width: 304px; margin-left: 5px; }
.apps button { width: 20px; height: 34px; display: grid; place-items: center; }
.apps svg { width: 19px; height: 23px; }
.apps .hp span { display: grid; place-items: center; width: 16px; height: 21px; background: #0f92d2; color: #fff; font-size: 5px; font-style: italic; }
.apps .running { background: linear-gradient(#aaa, #aaa) center bottom / 4px 2px no-repeat; }
.apps .open { background: linear-gradient(#d9a0dc, #d9a0dc) center bottom / 10px 2px no-repeat #3b2730; border-radius: 3px; }
.weather { display: flex; align-items: center; gap: 3px; width: 104px; }
.weather svg { width: 18px; height: 26px; }
.tray { display: flex; gap: 8px; margin-right: 8px; }
.tray svg, .net-tray svg { width: 12px; height: 16px; }
.lang { width: 24px; text-align: center; margin-right: 6px; }
.net-tray { display: flex; gap: 3px; margin-right: 10px; }
.taskbar .date { width: 22px; overflow: hidden; padding-top: 13px; }
```
